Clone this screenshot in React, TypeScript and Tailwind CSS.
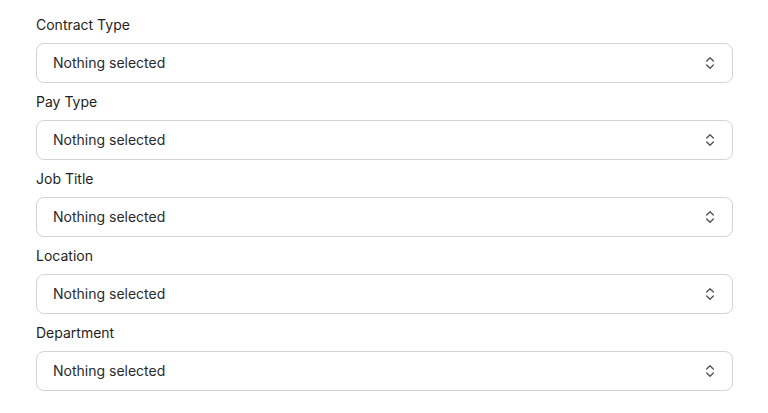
import { ChevronsUpDown } from "lucide-react";

const fields = ["Contract Type", "Pay Type", "Job Title", "Location", "Department"];

function SelectField({ label }: { label: string }) {
  return (
    <div className="flex flex-col gap-2">
      <label className="text-sm font-normal leading-5 text-[#1f1f23]">{label}</label>
      <div
        role="button"
        className="flex h-10 w-full items-center justify-between rounded-lg border border-[#d4d4d8] bg-white pl-4 pr-[14px] text-sm text-[#2a2a2e]"
      >
        <span>Nothing selected</span>
        <ChevronsUpDown className="h-4 w-4 text-[#52525b]" strokeWidth={2} />
      </div>
    </div>
  );
}

export default function App() {
  return (
    <div
      className="min-h-screen bg-white"
      style={{ fontFamily: "Inter, 'Noto Sans', sans-serif" }}
    >
      <div className="ml-9 flex w-[697px] flex-col gap-[9px] pt-[15px]">
        {fields.map((f) => (
          <SelectField key={f} label={f} />
        ))}
      </div>
    </div>
  );
}
